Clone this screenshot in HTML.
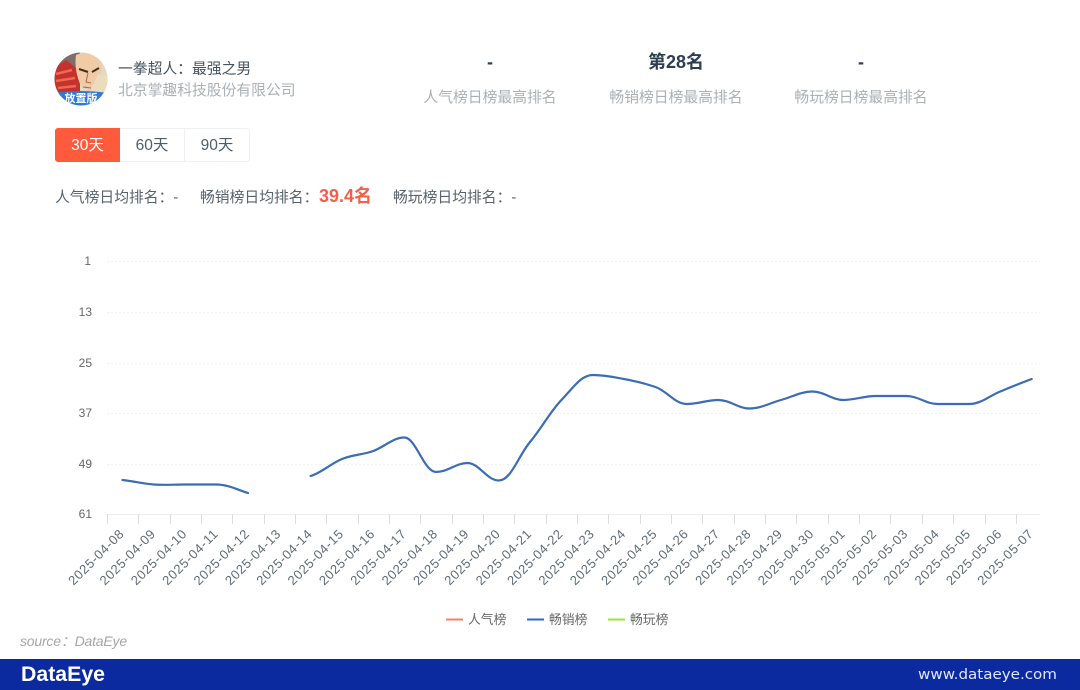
<!DOCTYPE html>
<html lang="zh">
<head>
<meta charset="utf-8">
<title>DataEye</title>
<style>
html,body{margin:0;padding:0;background:#fff}
body{position:relative;width:1080px;height:690px;overflow:hidden;font-family:"Liberation Sans","Noto Sans CJK SC",sans-serif;color:#4a5a66}
#w{position:absolute;left:0;top:0;width:1080px;height:690px;filter:blur(.35px)}
.a{position:absolute;white-space:nowrap}
.c{transform:translateX(-50%)}
.btn{position:absolute;top:128px;height:34px;width:65px;box-sizing:border-box;border:1px solid #eef0f1;line-height:33px;text-align:center;font-size:15.500px;color:#4f5d69;background:#fff}
svg{position:absolute;left:0;top:0}
</style>
</head>
<body>
<div id="w">
<svg width="1080" height="690" viewBox="0 0 1080 690" font-family="'Liberation Sans','Noto Sans CJK SC',sans-serif">
<defs><clipPath id="av"><circle cx="81" cy="79" r="26.500"/></clipPath></defs>
<g clip-path="url(#av)">
<rect x="54" y="52" width="54" height="54" fill="#e2d8c4"/>
<rect x="54" y="52" width="26" height="18" fill="#7f6f68"/>
<path d="M54 68 L66 60 L76 68 L80 78 L80 96 L54 96Z" fill="#c5312c"/>
<path d="M56 74 L72 70 M56 81 L75 78 M58 88 L76 86" stroke="#eb6a52" stroke-width="2.500" fill="none"/>
<path d="M76 55 Q88 49 101 57 Q104 69 98 79 L90 92 L80 84 Q74 69 76 55Z" fill="#efcba6"/>
<path d="M79 69 L88 72 M92 72 L99 68" stroke="#4a2a1e" stroke-width="2" fill="none"/>
<path d="M88 73 L86 82 L91 83 M83 87 L91 88" stroke="#a8694a" stroke-width="1" fill="none"/>
<path d="M98 74 L108 76 L108 96 L88 96Z" fill="#eadcbc"/>
<path d="M54 93 Q81 89 108 93 V106 H54Z" fill="#2f7ad6"/>
<text x="81" y="102" font-size="11" fill="#fff" text-anchor="middle" font-weight="700">放置版</text>
</g>

<g stroke="#f1f2f3" stroke-width="1" stroke-dasharray="2 2">
<path d="M107 261.500H1040M107 312.500H1040M107 363.500H1040M107 413.500H1040M107 464.500H1040"/>
</g>
<path d="M107 514.500H1040" stroke="#eeeeee"/>
<g stroke="#dddddd" stroke-width="1">
<path d="M107.500 514V524M138.500 514V524M170.500 514V524M201.500 514V524M232.500 514V524M264.500 514V524M295.500 514V524M326.500 514V524M358.500 514V524M389.500 514V524M420.500 514V524M452.500 514V524M483.500 514V524M514.500 514V524M546.500 514V524M577.500 514V524M608.500 514V524M640.500 514V524M671.500 514V524M702.500 514V524M734.500 514V524M765.500 514V524M796.500 514V524M828.500 514V524M859.500 514V524M890.500 514V524M922.500 514V524M953.500 514V524M985.500 514V524M1016.500 514V524"/>
</g>
<g font-size="12" fill="#666" text-anchor="end">
<text x="91" y="265">1</text>
<text x="92" y="316">13</text>
<text x="92" y="367">25</text>
<text x="92" y="417">37</text>
<text x="92" y="468">49</text>
<text x="92" y="518">61</text>
</g>
<g fill="none" stroke="#3b6cb4" stroke-width="2.200" stroke-linecap="round">
<path d="M122.500 480C133 481 143 483.700 153.800 484.500C165 485.300 174 484.500 185.200 484.500C196 484.500 206 484.500 216.500 484.500C228 484.500 238 490 248 493"/>
<path d="M310.600 476C321 473 331 463.500 342 459C353 454.500 362 455 373.300 451C384 447.100 394 437 404.700 437.500C416 438 424 472 436 472C448 472 456 463 467.400 463C479 463 487 480.500 498.700 480.500C511 480.500 518 456.500 530 442C542 427.500 550 412 561.400 400C573 388 581 375 592.800 375C604 375 613 377 624 379C635 381 645 383.500 655.500 387C667 391 675 404 686.800 404C698 404 707 400 718.200 400C730 400 738 408.500 749.500 408.500C761 408.500 770 403 780.900 400C792 397 801 391.500 812.200 391.500C824 391.500 832 400 843.500 400C855 400 864 396 875 396C886 396 896 396 906.300 396C918 396 926 404 937.600 404C949 404 958 404 969 404C981 404 989 396 1000.300 391.500C1011 387 1021 383 1031.700 379"/>
</g>
<g font-size="13" fill="#5f6b75" text-anchor="end">
<text transform="translate(124.500 535) rotate(-45)" textLength="72">2025-04-08</text>
<text transform="translate(155.850 535) rotate(-45)" textLength="72">2025-04-09</text>
<text transform="translate(187.200 535) rotate(-45)" textLength="72">2025-04-10</text>
<text transform="translate(218.550 535) rotate(-45)" textLength="72">2025-04-11</text>
<text transform="translate(249.900 535) rotate(-45)" textLength="72">2025-04-12</text>
<text transform="translate(281.250 535) rotate(-45)" textLength="72">2025-04-13</text>
<text transform="translate(312.600 535) rotate(-45)" textLength="72">2025-04-14</text>
<text transform="translate(343.950 535) rotate(-45)" textLength="72">2025-04-15</text>
<text transform="translate(375.300 535) rotate(-45)" textLength="72">2025-04-16</text>
<text transform="translate(406.650 535) rotate(-45)" textLength="72">2025-04-17</text>
<text transform="translate(438 535) rotate(-45)" textLength="72">2025-04-18</text>
<text transform="translate(469.350 535) rotate(-45)" textLength="72">2025-04-19</text>
<text transform="translate(500.700 535) rotate(-45)" textLength="72">2025-04-20</text>
<text transform="translate(532.050 535) rotate(-45)" textLength="72">2025-04-21</text>
<text transform="translate(563.400 535) rotate(-45)" textLength="72">2025-04-22</text>
<text transform="translate(594.750 535) rotate(-45)" textLength="72">2025-04-23</text>
<text transform="translate(626.100 535) rotate(-45)" textLength="72">2025-04-24</text>
<text transform="translate(657.450 535) rotate(-45)" textLength="72">2025-04-25</text>
<text transform="translate(688.800 535) rotate(-45)" textLength="72">2025-04-26</text>
<text transform="translate(720.150 535) rotate(-45)" textLength="72">2025-04-27</text>
<text transform="translate(751.500 535) rotate(-45)" textLength="72">2025-04-28</text>
<text transform="translate(782.850 535) rotate(-45)" textLength="72">2025-04-29</text>
<text transform="translate(814.200 535) rotate(-45)" textLength="72">2025-04-30</text>
<text transform="translate(845.550 535) rotate(-45)" textLength="72">2025-05-01</text>
<text transform="translate(876.900 535) rotate(-45)" textLength="72">2025-05-02</text>
<text transform="translate(908.250 535) rotate(-45)" textLength="72">2025-05-03</text>
<text transform="translate(939.600 535) rotate(-45)" textLength="72">2025-05-04</text>
<text transform="translate(970.950 535) rotate(-45)" textLength="72">2025-05-05</text>
<text transform="translate(1002.300 535) rotate(-45)" textLength="72">2025-05-06</text>
<text transform="translate(1033.650 535) rotate(-45)" textLength="72">2025-05-07</text>
</g>
<path d="M446 619.500H463" stroke="#f5806e" stroke-width="2"/>
<path d="M527 619.500H544" stroke="#2f6ab5" stroke-width="2"/>
<path d="M608 619.500H625" stroke="#9be53a" stroke-width="2"/>
<g font-size="12.800" fill="#666">
<text x="468" y="624">人气榜</text>
<text x="549" y="624">畅销榜</text>
<text x="630" y="624">畅玩榜</text>
</g>
<rect x="0" y="659" width="1080" height="31" fill="#0b2aa0"/>
<text x="21" y="681" font-size="21.500" font-weight="700" fill="#fff" textLength="84" lengthAdjust="spacingAndGlyphs">DataEye</text>
<text x="918" y="679" font-family="'DejaVu Sans',sans-serif" font-size="14" fill="#dfe7ff" textLength="139" lengthAdjust="spacingAndGlyphs">www.dataeye.com</text>
</svg>

<div class="a" style="left:118px;top:58px;font-size:14.800px;line-height:20px;color:#46525c;transform:translateY(1.500px)">一拳超人：最强之男</div>
<div class="a" style="left:118px;top:81px;font-size:14.800px;line-height:20px;color:#aab0b5">北京掌趣科技股份有限公司</div>

<div class="a c" style="left:490px;top:50px;font-size:18px;line-height:24px;font-weight:700;color:#2c3e50">-</div>
<div class="a c" style="left:676px;top:50px;font-size:18px;line-height:24px;font-weight:700;color:#2c3e50">第28名</div>
<div class="a c" style="left:861px;top:50px;font-size:18px;line-height:24px;font-weight:700;color:#2c3e50">-</div>
<div class="a c" style="left:490px;top:88px;font-size:14.800px;line-height:20px;color:#aab0b5">人气榜日榜最高排名</div>
<div class="a c" style="left:676px;top:88px;font-size:14.800px;line-height:20px;color:#aab0b5">畅销榜日榜最高排名</div>
<div class="a c" style="left:861px;top:88px;font-size:14.800px;line-height:20px;color:#aab0b5">畅玩榜日榜最高排名</div>

<div class="btn" style="left:55px;background:#ff5a3c;border-color:#ff5a3c;color:#fff;border-radius:3px 0 0 3px">30天</div>
<div class="btn" style="left:120px;border-left:0">60天</div>
<div class="btn" style="left:185px;border-left:0;border-radius:0 3px 3px 0">90天</div>

<div class="a" style="left:55px;top:188px;font-size:14.800px;line-height:20px;color:#56626c">人气榜日均排名：-</div>
<div class="a" style="left:200px;top:188px;font-size:14.800px;line-height:20px;color:#56626c">畅销榜日均排名：</div>
<div class="a" style="left:319px;top:184px;font-size:18px;line-height:24px;font-weight:700;color:#f0604a">39.4名</div>
<div class="a" style="left:393px;top:188px;font-size:14.800px;line-height:20px;color:#56626c">畅玩榜日均排名：-</div>

<div class="a" style="left:20px;top:631px;font-size:14px;line-height:20px;font-style:italic;letter-spacing:-.2px;color:#a6a6a6">source：DataEye</div>
</div>
</body>
</html>
